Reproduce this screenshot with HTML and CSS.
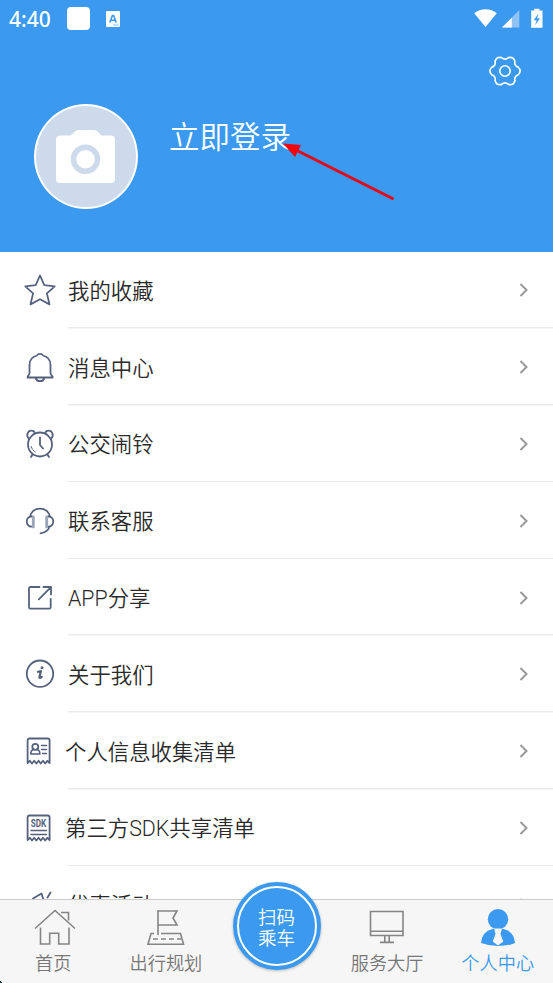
FILE: index.html
```html
<!DOCTYPE html>
<html lang="zh-CN">
<head>
    <meta charset="UTF-8">
    <meta name="viewport" content="width=device-width, initial-scale=1.0">
    <title>个人中心</title>
    <link rel="stylesheet" href="styles.css">
</head>
<body>
    <div class="app">
        <header class="header">
            <div class="status-bar">
                <span class="time">4:40</span>
                <span class="status-square"></span>
                <svg class="status-a" width="14" height="16" viewBox="0 0 14 16">
                    <rect width="14" height="16" rx="1" fill="#fff"/>
                    <path d="M3.800 11.500 6.400 4.500h1.200l2.600 7M4.800 9.300h4.400" fill="none" stroke="#3b99ef" stroke-width="1.600"/>
                    <path d="M7.500 14h5" stroke="#3b99ef" stroke-width="1.200" stroke-dasharray="1.200 .8"/>
                </svg>
                <svg class="status-icons" width="72" height="22" viewBox="0 0 72 22">
                    <path d="M11.500 20 .2 6.200C3.500 3.500 7.300 2.200 11.500 2.200S19.500 3.500 22.800 6.200Z" fill="#fff"/>
                    <path d="M45.300 3v17.500H28Z" fill="#8fc3f6"/>
                    <path d="M37.800 10.700v9.800H28Z" fill="#fff"/>
                    <path d="M57.200 3.500h3V1.800h5.200v1.700h3.100v17.200H57.200Z" fill="#fff"/>
                    <path d="m64.600 6.300-4.900 7h2.900l-1.500 4.900 4.900-7h-2.900Z" fill="#3b99ef"/>
                </svg>
            </div>
            <svg class="settings" width="34" height="32" viewBox="-17 -16 34 32">
                <g fill="none" stroke="#fff" stroke-width="1.600" stroke-linecap="round">
                    <path id="tooth" d="M13.300-3.700Q17 0 13.300 3.700 9.100 5.250 9.850 9.670"/>
                    <use href="#tooth" transform="rotate(60)"/>
                    <use href="#tooth" transform="rotate(120)"/>
                    <use href="#tooth" transform="rotate(180)"/>
                    <use href="#tooth" transform="rotate(240)"/>
                    <use href="#tooth" transform="rotate(300)"/>
                    <circle r="5.200"/>
                </g>
            </svg>
            <div class="profile">
                <div class="avatar">
                    <svg width="60" height="54" viewBox="0 0 60 54">
                        <path d="M5 5.500h10L19 1.500Q20.500 0 22.500 0h15.500q2 0 3.500 1.500l4 4H55q4 0 4 4V49q0 4-4 4H4q-4 0-4-4V9.500q0-4 5-4Z" fill="#fff"/>
                        <circle cx="29.500" cy="29.300" r="12" fill="#fff" stroke="#cddaec" stroke-width="5.500"/>
                    </svg>
                </div>
                <div class="login">立即登录</div>
            </div>
            <svg class="arrow" width="114" height="62" viewBox="0 0 114 62">
                <path d="M14 8.500 109.500 56.500" stroke="#e30b14" stroke-width="3" stroke-linecap="round"/>
                <path d="M0 1.500 18 3 12 15Z" fill="#f80308"/>
            </svg>
        </header>

        <main class="menu">
            <div class="row">
                <svg class="icon" viewBox="0 0 32 32"><path d="M16 1.500l4.300 9.700 10.400 1.100-7.800 7.100 2.600 11L16 25.300 6.500 30.400l2.600-11-7.800-7.100 10.400-1.100Z"/></svg>
                <div class="label">我的收藏</div>
                <svg class="chevron" viewBox="0 0 10 16"><path d="m1.500 2 6 6-6 6"/></svg>
            </div>
            <div class="row">
                <svg class="icon" viewBox="0 0 32 32"><path d="M3.500 26.500h25.200c0-2.300-2.200-2-2.200-4.500V14c0-5.500-3.500-8.500-7.500-9.500-1-2.300-5-2.300-6 0-4 1-7.500 4-7.500 9.500v8c0 2.500-2 2.200-2 4.500ZM11.800 27c.7 4.200 7.700 4.200 8.400 0"/></svg>
                <div class="label">消息中心</div>
                <svg class="chevron" viewBox="0 0 10 16"><path d="m1.500 2 6 6-6 6"/></svg>
            </div>
            <div class="row">
                <svg class="icon" viewBox="0 0 32 32">
                    <circle cx="16" cy="16.500" r="12"/>
                    <path d="M4.800 10.500C1.500 7.500 4 2.500 7.500 2.700c2 0 3 1 3.500 2.800M27.200 10.500c3.300-3 .8-8-2.700-7.800-2 0-3 1-3.500 2.800M8.500 26.500l-1.500 2.500M23.500 26.500l1.500 2.500M16 9.500v7.500l3 3.500"/>
                    <path d="M7.200 18.500c.7 2.500 2 4.200 4.300 5.500" stroke-width="1" stroke-dasharray="3 1"/>
                </svg>
                <div class="label">公交闹铃</div>
                <svg class="chevron" viewBox="0 0 10 16"><path d="m1.500 2 6 6-6 6"/></svg>
            </div>
            <div class="row">
                <svg class="icon" viewBox="0 0 32 32">
                    <path d="M6 11.500C7.500 6.500 11 3.700 16 3.700s8.500 2.800 10 7.800M8 11.500c-7-.5-7 10.500 0 10.200M24 11.500c7-.5 7 10.500 0 10.200M25.500 22c-1.500 4-4.500 5.700-9 6.300"/>
                    <path d="M9.300 12v10M22.700 12v10" stroke="#9ba5b7" stroke-width="2.800"/>
                </svg>
                <div class="label">联系客服</div>
                <svg class="chevron" viewBox="0 0 10 16"><path d="m1.500 2 6 6-6 6"/></svg>
            </div>
            <div class="row">
                <svg class="icon" viewBox="0 0 32 32"><path d="M15.500 5H6.500Q5 5 5 6.500v18.700q0 1.500 1.500 1.500h18.700q1.500 0 1.500-1.500V17M19.500 5h7.500v7.400M26.700 5.400 14.800 17.400"/></svg>
                <div class="label">APP分享</div>
                <svg class="chevron" viewBox="0 0 10 16"><path d="m1.500 2 6 6-6 6"/></svg>
            </div>
            <div class="row">
                <svg class="icon" viewBox="0 0 32 32">
                    <circle cx="16" cy="15.700" r="13.200"/>
                    <path d="M14 13.800 17 13l-1.600 6.200q-.3 1.600 2.400-.4" stroke-width="2.200"/>
                    <circle class="fill" cx="18" cy="9.800" r="1.500"/>
                </svg>
                <div class="label">关于我们</div>
                <svg class="chevron" viewBox="0 0 10 16"><path d="m1.500 2 6 6-6 6"/></svg>
            </div>
            <div class="row doc">
                <svg class="icon" viewBox="0 0 32 32">
                    <path d="M3.600 28V5.500q0-2 2-2h18q2 0 2 2V28l-2.200-2.200-2.200 2.700-2.200-2.700-2.200 2.700-2.200-2.700-2.200 2.700-2.200-2.700-2.200 2.700-2.200-2.700Z"/>
                    <circle cx="11.300" cy="11.800" r="3"/>
                    <path d="M9.500 14.500q-3 1-2.800 4.500h9.200q.2-3.500-2.800-4.500M17.500 10.500h5M17.500 14.500h5M18.500 18.500h4" stroke-width="1.500"/>
                </svg>
                <div class="label">个人信息收集清单</div>
                <svg class="chevron" viewBox="0 0 10 16"><path d="m1.500 2 6 6-6 6"/></svg>
            </div>
            <div class="row doc">
                <svg class="icon" viewBox="0 0 32 32">
                    <path d="M3.600 28V5.500q0-2 2-2h18q2 0 2 2V28l-2.200-2.200-2.200 2.700-2.200-2.700-2.200 2.700-2.200-2.700-2.200 2.700-2.200-2.700-2.200 2.700-2.200-2.700Z"/>
                    <text x="6.800" y="15" textLength="15.500" lengthAdjust="spacingAndGlyphs">SDK</text>
                    <path d="M7 18.600h15.500M7 22.400h15.500" stroke-width="1.500"/>
                </svg>
                <div class="label">第三方SDK共享清单</div>
                <svg class="chevron" viewBox="0 0 10 16"><path d="m1.500 2 6 6-6 6"/></svg>
            </div>
            <div class="row">
                <svg class="icon" viewBox="0 0 32 32"><path d="M9 9.500 17.500 4.500 19.500 11M26.500 3.500l-3 5"/></svg>
                <div class="label">优惠活动</div>
                <svg class="chevron" viewBox="0 0 10 16"><path d="m1.500 2 6 6-6 6"/></svg>
            </div>
        </main>

        <nav class="tabs">
            <a class="tab home">
                <svg width="44" height="40" viewBox="0 0 44 40"><path d="m2 20.500 20-18 20 18M7.500 19.500V36h9.200V25.300h9V36H36V19.500M28 4.500h7.500v8"/></svg>
                <span>首页</span>
            </a>
            <a class="tab">
                <svg width="44" height="40" viewBox="0 0 44 40"><path d="M14 27V2M14 3h19l-4 7 4 7H14M10 25.500H7L4 36.300h35.500l-3-10.800H17"/><path d="M9 31h28" stroke-dasharray="5 3"/></svg>
                <span>出行规划</span>
            </a>
            <a class="tab scan">
                <span class="scan-ring">扫码<br>乘车</span>
            </a>
            <a class="tab">
                <svg width="44" height="40" viewBox="0 0 44 40"><path d="M5.500 3.500H38v24H5.500ZM5.500 23.200H38M19.800 28v6M24.200 28v6M15 34.400h14"/></svg>
                <span>服务大厅</span>
            </a>
            <a class="tab active">
                <svg width="44" height="40" viewBox="0 0 44 40">
                    <circle cx="22" cy="11.300" r="10.200"/>
                    <path d="M5 35q1-11.500 11.500-14h11Q38 23.500 39 35q-8 3-17 3T5 35Z"/>
                    <path class="tie" d="M18 20.500h8L25 24l-.5 2 2.800 7.500-5.300 4-5.300-4 2.800-7.500L19 24Z"/>
                </svg>
                <span>个人中心</span>
            </a>
        </nav>
    </div>
</body>
</html>
```
FILE: styles.css
```css
body {
    margin: 0;
    padding: 0;
    font-family: Roboto, "Noto Sans CJK SC", sans-serif;
    font-weight: 350;
    background-color: white;
}

.app {
    display: flex;
    flex-direction: column;
    height: 983px;
    overflow: hidden;
}

.header {
    position: relative;
    display: flex;
    flex-direction: column;
    flex: none;
    height: 252px;
    background-color: #3b99ef;
    color: white;
}

.status-bar {
    display: flex;
    align-items: center;
    height: 37px;
    padding: 0 7px 0 9px;
}

.time {
    width: 58px;
    font-family: "Noto Sans", sans-serif;
    font-size: 21px;
    font-weight: 500;
}

.status-square {
    width: 23px;
    height: 23px;
    margin-right: 16px;
    border-radius: 4px;
    background-color: white;
}

.status-icons {
    margin-left: auto;
    margin-bottom: 2px;
}

.settings {
    align-self: flex-end;
    margin: 18px 31px 0 0;
}

.profile {
    display: flex;
    margin: 17px 0 0 34px;
}

.avatar {
    display: flex;
    align-items: center;
    justify-content: center;
    box-sizing: border-box;
    width: 104px;
    height: 105px;
    border: 2px solid white;
    border-radius: 50%;
    background-color: #cddaec;
}

.login {
    margin: 12px 0 0 31px;
    font-size: 30.5px;
    line-height: 44px;
}

/* pointer drawn over the login text */
.arrow {
    position: absolute;
    left: 283px;
    top: 142px;
}

.menu {
    flex: 1;
    min-height: 0;
    overflow: hidden;
}

.row {
    display: flex;
    align-items: center;
    height: 76.8px;
    padding: 0 24px;
    background: linear-gradient(#ebebeb, #ebebeb) 68px 100% / 100% 1.5px no-repeat;
}

.icon {
    width: 32px;
    height: 32px;
    fill: none;
    stroke: #56627d;
    stroke-width: 1.8;
    stroke-linejoin: round;
    stroke-linecap: round;
}

.icon .fill {
    fill: #56627d;
    stroke: none;
}

.icon text {
    fill: #56627d;
    stroke: none;
    font-size: 11px;
    font-weight: 700;
}

.label {
    flex: 1;
    margin-left: 12px;
    padding-top: 3px;
    font-size: 21.4px;
    line-height: 32px;
    color: #2a2a2a;
}

.doc .label {
    margin-left: 9px;
}

.chevron {
    width: 10px;
    height: 16px;
    fill: none;
    stroke: #999;
    stroke-width: 2;
}

.tabs {
    display: flex;
    flex: none;
    height: 83px;
    border-top: 1px solid #ccc;
    background: linear-gradient(45deg, #0b3a4a 2px, transparent 2px) #f6f6f6;
}

.tab {
    display: flex;
    flex: 1;
    flex-direction: column;
    align-items: center;
    padding-top: 8px;
    font-size: 18.2px;
    line-height: 32px;
    color: #777;
}

.tab svg {
    fill: none;
    stroke: #858585;
    stroke-width: 1.6;
}

.home span {
    margin-right: 4px;
}

.active {
    color: #3b99ef;
}

.active svg {
    fill: #3b99ef;
    stroke: none;
}

.active .tie {
    fill: #f6f6f6;
}

.scan {
    box-sizing: border-box;
    flex: none;
    width: 88px;
    height: 88px;
    margin: -18px 11.3px 0;
    padding: 4px;
    border-radius: 50%;
    background-color: #3b99ef;
    box-shadow: 0 1px 3px rgba(0, 0, 0, 0.25);
    z-index: 1;
}

.scan-ring {
    display: flex;
    align-items: center;
    justify-content: center;
    box-sizing: border-box;
    width: 80px;
    height: 80px;
    padding-top: 6px;
    border: 2px solid white;
    border-radius: 50%;
    font-size: 18.5px;
    line-height: 21.5px;
    color: white;
}
```
